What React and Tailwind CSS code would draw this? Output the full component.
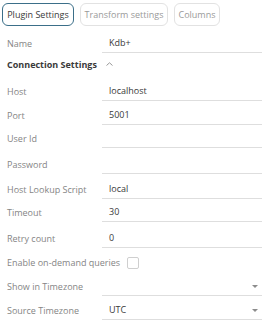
import React from "react";

const Row = ({ label, value, dropdown, h = "h-[24px]" }) => (
  <div className={`flex ${h} items-end`}>
    <div className="w-[95px] shrink-0 pb-[2px] leading-[14px] text-[#858585]">{label}</div>
    <div className="relative flex h-full w-[160px] items-end border-b border-[#dedede] pb-[2px] pl-[7px] leading-[14px] text-[#3a3a3a]">
      {value}
      {dropdown && (
        <svg className="absolute right-[4px] bottom-[7px]" width="6" height="3" viewBox="0 0 6 3">
          <path d="M0 0H6L3 3Z" fill="#8c8c8c" />
        </svg>
      )}
    </div>
  </div>
);

export default function App() {
  return (
    <div className="h-[325px] w-[274px] bg-white pl-[7px] pt-[3px] text-[9px]" style={{ fontFamily: '"Open Sans", sans-serif' }}>
      <div className="ml-[-5px] flex gap-[6px] text-[9px]">
        <div className="flex h-[23px] w-[72px] items-center justify-center rounded-[6px] border-[1.5px] border-[#3b6f89] text-[#3a3a3a]">Plugin Settings</div>
        <div className="flex h-[23px] w-[88px] items-center justify-center rounded-[6px] border border-[#e2e2e2] text-[#9a9a9a]">Transform settings</div>
        <div className="flex h-[23px] w-[46px] items-center justify-center rounded-[6px] border border-[#e2e2e2] text-[#9a9a9a]">Columns</div>
      </div>
      <div className="mt-[3px]">
        <Row label="Name" value="Kdb+" />
        <div className="flex h-[24px] items-center">
          <div className="w-[95px] shrink-0 whitespace-nowrap font-bold text-[#3a3a3a]">Connection Settings</div>
          <svg className="ml-[4px] mt-[-3px]" width="7" height="4" viewBox="0 0 7 4">
            <path d="M0.5 3.5L3.5 0.8L6.5 3.5" fill="none" stroke="#8c8c8c" strokeWidth="0.9" />
          </svg>
        </div>
        <Row label="Host" value="localhost" />
        <Row label="Port" value="5001" />
        <Row label="User Id" value="" h="h-[23px]" />
        <Row label="Password" value="" h="h-[26px]" />
        <Row label="Host Lookup Script" value="local" h="h-[25px]" />
        <Row label="Timeout" value="30" h="h-[23px]" />
        <Row label="Retry count" value="0" h="h-[26px]" />
        <div className="flex h-[24px] items-end">
          <div className="pb-[2px] leading-[14px] text-[#858585]">Enable on-demand queries</div>
          <div className="mb-[3px] ml-[7px] h-[12px] w-[12px] rounded-[2px] border border-[#cfcfcf]" />
        </div>
        <Row label="Show in Timezone" value="" dropdown />
        <Row label="Source Timezone" value="UTC" dropdown />
      </div>
    </div>
  );
}
